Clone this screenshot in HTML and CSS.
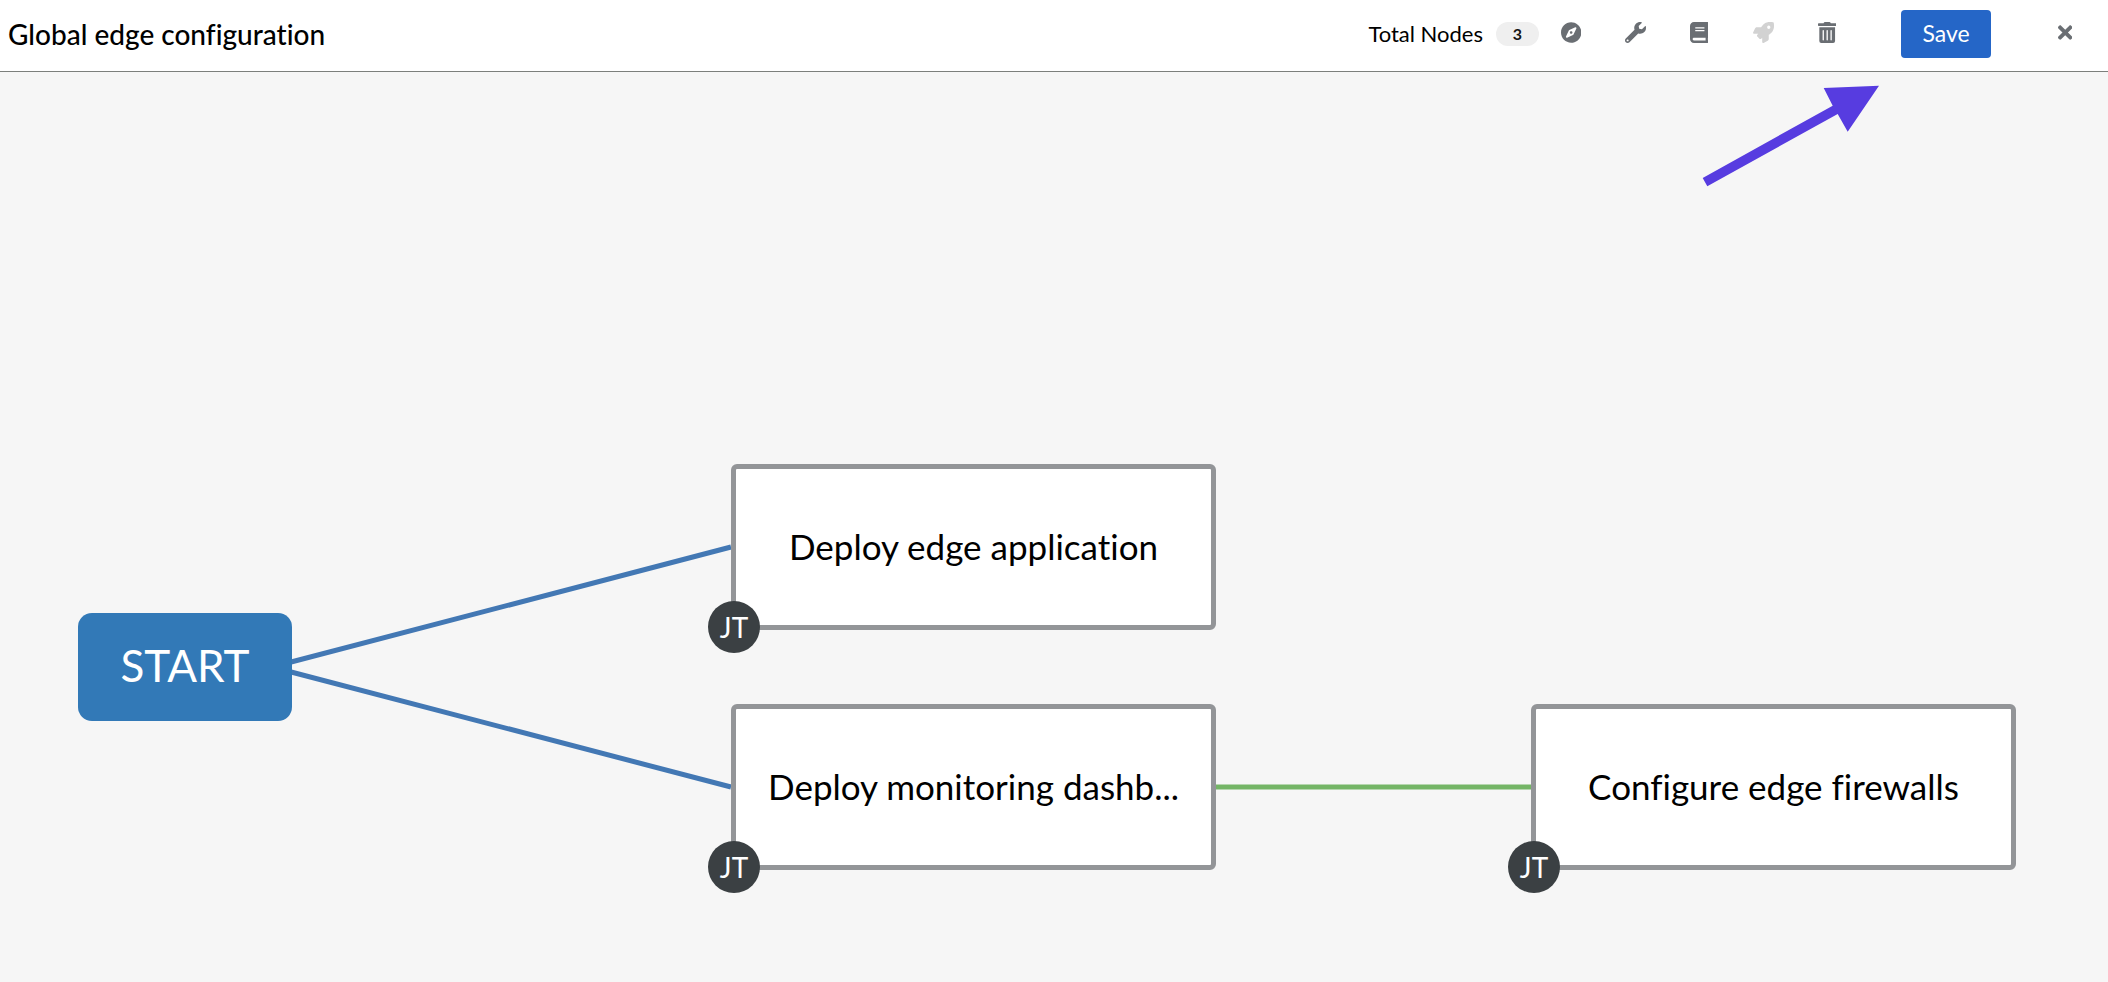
FILE: index.html
```html
<!DOCTYPE html>
<html lang="en">
<head>
<meta charset="utf-8">
<title>Global edge configuration</title>
<link rel="stylesheet" href="styles.css">
</head>
<body>
<header class="toolbar">
  <h1 class="title">Global edge configuration</h1>
  <div class="actions">
    <span class="total">Total Nodes</span>
    <span class="badge">3</span>
    <button class="icon-button" type="button" aria-label="Toggle tools"><svg class="icon" viewBox="0 0 496 512"><path d="M225.38 233.37c-12.5 12.5-12.5 32.76 0 45.25 12.49 12.5 32.76 12.5 45.25 0 12.5-12.5 12.5-32.76 0-45.25-12.5-12.49-32.76-12.49-45.25 0zM248 8C111.03 8 0 119.03 0 256s111.03 248 248 248 248-111.03 248-248S384.97 8 248 8zm126.14 148.05L308.17 300.4a31.938 31.938 0 0 1-15.77 15.77l-144.34 65.97c-16.65 7.61-33.81-9.55-26.2-26.2l65.98-144.35a31.938 31.938 0 0 1 15.77-15.77l144.34-65.97c16.65-7.6 33.8 9.55 26.19 26.2z"/></svg></button>
    <button class="icon-button" type="button" aria-label="Toggle legend"><svg class="icon" viewBox="0 0 512 512"><path d="M507.73 109.1c-2.24-9.03-13.54-12.09-20.12-5.51l-74.36 74.36-67.88-11.31-11.31-67.88 74.36-74.36c6.62-6.62 3.43-17.9-5.66-20.16-47.38-11.74-99.55.91-136.58 37.93-39.64 39.64-50.55 97.1-34.05 147.2L18.74 402.76c-24.99 24.99-24.99 65.51 0 90.5 24.99 24.99 65.51 24.99 90.5 0l213.21-213.21c50.12 16.71 107.47 5.68 147.37-34.22 37.07-37.07 49.7-89.32 37.91-136.73zM64 472c-13.25 0-24-10.75-24-24 0-13.26 10.75-24 24-24s24 10.74 24 24c0 13.25-10.75 24-24 24z"/></svg></button>
    <button class="icon-button" type="button" aria-label="Documentation"><svg class="icon" viewBox="0 0 448 512"><path d="M448 360V24c0-13.3-10.7-24-24-24H96C43 0 0 43 0 96v320c0 53 43 96 96 96h328c13.3 0 24-10.7 24-24v-16c0-7.5-3.5-14.3-8.9-18.7-4.2-15.4-4.2-59.3 0-74.7 5.4-4.3 8.9-11.1 8.9-18.6zM128 134c0-3.3 2.7-6 6-6h212c3.3 0 6 2.7 6 6v20c0 3.3-2.7 6-6 6H134c-3.3 0-6-2.7-6-6v-20zm0 64c0-3.3 2.7-6 6-6h212c3.3 0 6 2.7 6 6v20c0 3.3-2.7 6-6 6H134c-3.3 0-6-2.7-6-6v-20zm253.4 250H96c-17.7 0-32-14.3-32-32 0-17.6 14.4-32 32-32h285.4c-1.9 17.1-1.9 46.9 0 64z"/></svg></button>
    <button class="icon-button" type="button" aria-label="Launch workflow" disabled><svg class="icon" viewBox="0 0 512 512"><path d="M505.12 19.094c-1.19-5.531-6.658-11-12.207-12.188C460.716 0 435.507 0 410.407 0 307.175 0 245.27 55.203 199.052 128H94.838c-16.348.016-35.557 11.875-42.887 26.484L2.516 253.297A28.4 28.4 0 0 0 0 264a24.009 24.009 0 0 0 24.006 24h103.81l-22.474 22.469c-11.366 11.361-12.996 32.258 0 45.25l50.904 50.906c11.156 11.188 32.156 13.156 45.277 0l22.475-22.469V488a24.009 24.009 0 0 0 24.006 24 28.56 28.56 0 0 0 10.707-2.516l98.728-49.39c14.629-7.297 26.508-26.5 26.508-42.86V312.797c72.598-46.313 128.035-108.406 128.035-211.094.093-25.203.093-50.406-6.862-82.61ZM384.04 168a40 40 0 1 1 40.01-40 40.023 40.023 0 0 1-40.01 40Z"/></svg></button>
    <button class="icon-button" type="button" aria-label="Delete all nodes"><svg class="icon" viewBox="0 0 448 512"><path d="M32 464a48 48 0 0 0 48 48h288a48 48 0 0 0 48-48V128H32zm272-256a16 16 0 0 1 32 0v224a16 16 0 0 1-32 0zm-96 0a16 16 0 0 1 32 0v224a16 16 0 0 1-32 0zm-96 0a16 16 0 0 1 32 0v224a16 16 0 0 1-32 0zM432 32H312l-9.4-18.7A24 24 0 0 0 281.1 0H166.8a23.72 23.72 0 0 0-21.4 13.3L136 32H16A16 16 0 0 0 0 48v32a16 16 0 0 0 16 16h416a16 16 0 0 0 16-16V48a16 16 0 0 0-16-16z"/></svg></button>
    <button class="save" type="button">Save</button>
    <button class="icon-button" type="button" aria-label="Close"><svg class="icon" viewBox="0 0 352 512"><path d="M242.72 256l100.07-100.07c12.28-12.28 12.28-32.19 0-44.48l-22.24-22.24c-12.28-12.28-32.19-12.28-44.48 0L176 189.28 75.93 89.21c-12.28-12.28-32.19-12.28-44.48 0L9.21 111.45c-12.28 12.28-12.28 32.19 0 44.48L109.28 256 9.21 356.07c-12.28 12.28-12.28 32.19 0 44.48l22.24 22.24c12.28 12.28 32.2 12.28 44.48 0L176 322.72l100.07 100.07c12.28 12.28 32.2 12.28 44.48 0l22.24-22.24c12.28-12.28 12.28-32.19 0-44.48L242.72 256z"/></svg></button>
  </div>
</header>
<main class="canvas">
  <svg class="links" aria-hidden="true">
    <path class="link-always" d="M272 595 731 475M272 595 731 715"/>
    <path class="link-success" d="M1216 715H1531"/>
  </svg>
  <div class="start">START</div>
  <div class="node node-application"><span class="label">Deploy edge application</span><span class="type">JT</span></div>
  <div class="node node-dashboard"><span class="label">Deploy monitoring dashb...</span><span class="type">JT</span></div>
  <div class="node node-firewalls"><span class="label">Configure edge firewalls</span><span class="type">JT</span></div>
  <svg class="pointer" viewBox="0 0 178 102" aria-hidden="true"><path d="M.7 93 130.7 20.7 121.7 3 177 .7 145.7 46.7 135.7 29 5.3 101.3Z"/></svg>
</main>
</body>
</html>
```
FILE: styles.css
```css
* {
  box-sizing: border-box;
}

body {
  margin: 0;
  min-height: 100vh;
  display: flex;
  flex-direction: column;
  font-family: Lato, "Liberation Sans", sans-serif;
  font-variant-ligatures: none;
  color: #000;
  background: #f6f6f6;
}

button {
  border: 0;
  font: inherit;
  cursor: pointer;
}

.toolbar {
  display: flex;
  align-items: center;
  justify-content: space-between;
  height: 72px;
  padding: 0 11px 3px 8px;
  border-bottom: 1px solid #7c7f7c;
  background: #fff;
}

.title {
  margin: 0;
  font-size: 28px;
  font-weight: 500;
  line-height: 36px;
}

.actions {
  display: flex;
  align-items: center;
}

.total {
  margin-right: 13px;
  font-size: 22px;
  line-height: 32px;
}

.badge {
  width: 43px;
  border-radius: 12px;
  background: #efefef;
  color: #151515;
  font-size: 16px;
  font-weight: 700;
  line-height: 24px;
  text-align: center;
}

.icon-button {
  display: flex;
  align-items: center;
  justify-content: center;
  width: 64px;
  height: 48px;
  padding: 0 0 3px;
  background: none;
  color: #6a6e73;
}

.icon-button:disabled {
  color: #d2d2d2;
}

.icon {
  height: 21px;
  fill: currentColor;
}

.save {
  width: 90px;
  height: 48px;
  margin: 0 42px;
  padding: 0 0 2px;
  border-radius: 4px;
  background: #2566c7;
  color: #fff;
  font-size: 23px;
}

.canvas {
  position: relative;
  flex: 1;
  overflow: hidden;
}

.links {
  position: absolute;
  width: 100%;
  height: 100%;
  fill: none;
  stroke-width: 5px;
}

.link-always {
  stroke: #4378b4;
}

.link-success {
  stroke: #74b566;
}

.start {
  position: absolute;
  left: 78px;
  top: 541px;
  width: 214px;
  height: 108px;
  border-radius: 14px;
  background: #3279b7;
  color: #fff;
  font-size: 44px;
  line-height: 104px;
  text-align: center;
}

.node {
  position: absolute;
  display: flex;
  align-items: center;
  justify-content: center;
  width: 485px;
  height: 166px;
  padding-bottom: 2px;
  border: 5px solid #939598;
  border-radius: 6px;
  background: #fff;
}

.node-application {
  left: 731px;
  top: 392px;
}

.node-dashboard {
  left: 731px;
  top: 632px;
}

.node-firewalls {
  left: 1531px;
  top: 632px;
}

.label {
  font-size: 35px;
  line-height: 48px;
  white-space: nowrap;
}

.type {
  position: absolute;
  left: -28px;
  bottom: -28px;
  width: 52px;
  border-radius: 50%;
  background: #3b4043;
  color: #fff;
  font-size: 28px;
  line-height: 52px;
  text-align: center;
}

.pointer {
  position: absolute;
  left: 1702px;
  top: 13px;
  width: 178px;
  fill: #573ce0;
}
```
